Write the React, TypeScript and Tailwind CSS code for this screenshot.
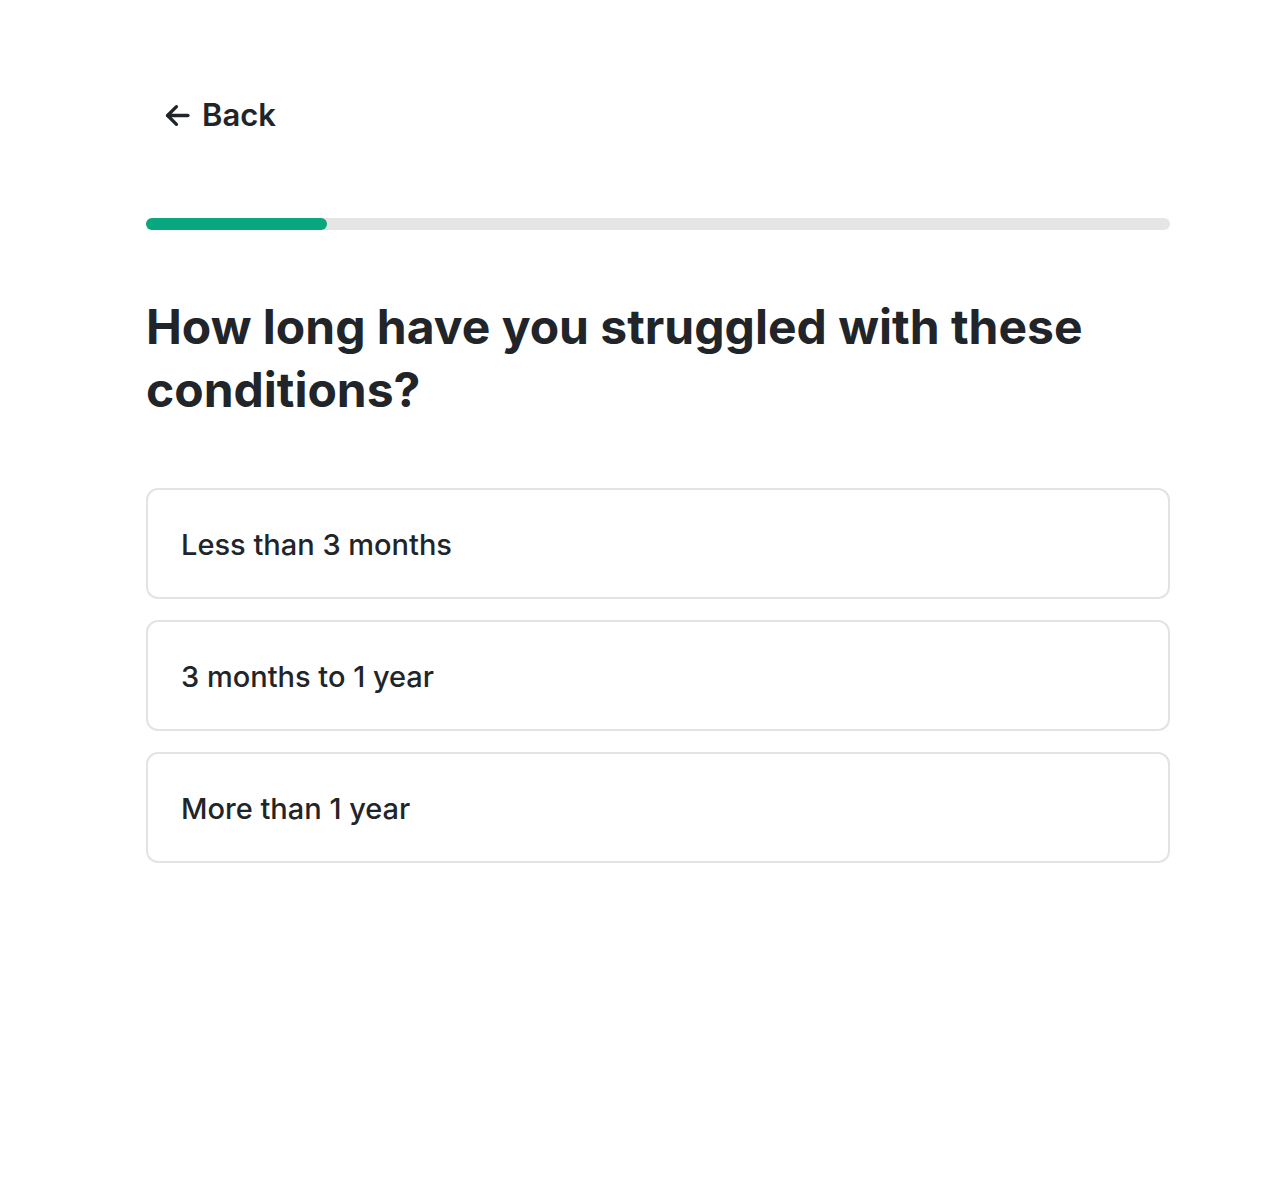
const OPTIONS = ["Less than 3 months", "3 months to 1 year", "More than 1 year"];

function BackArrow() {
  return (
    <svg
      width="25"
      height="25"
      viewBox="0 0 24 24"
      fill="none"
      stroke="currentColor"
      strokeWidth="3.2"
      strokeLinecap="round"
      strokeLinejoin="round"
    >
      <path d="M22 12H2.5" />
      <path d="M11 3.5 2.5 12l8.5 8.5" />
    </svg>
  );
}

export default function App() {
  return (
    <div className="min-h-screen bg-white font-['Inter',sans-serif] text-[#212529]">
      <div className="ml-[146px] w-[1024px] pt-[93px]">
        <button
          type="button"
          className="ml-[19px] flex items-center gap-[12px] text-[31px] font-semibold leading-[44px]"
        >
          <BackArrow />
          <span>Back</span>
        </button>

        <div className="mt-[81px] h-[12px] w-full rounded-full bg-[#e5e5e5]">
          <div className="h-full w-[181px] rounded-full bg-[#08a77d]" />
        </div>

        <h1 className="mt-[65px] text-[48px] font-bold leading-[63px]">
          How long have you struggled with these conditions?
        </h1>

        <div className="mt-[67px] flex flex-col gap-[21px]">
          {OPTIONS.map((label) => (
            <button
              key={label}
              type="button"
              className="flex h-[111px] w-full items-center rounded-[12px] border-2 border-[#e3e3e3] px-[33px] pt-[3px] text-left text-[29px] font-medium"
            >
              {label}
            </button>
          ))}
        </div>
      </div>
    </div>
  );
}
